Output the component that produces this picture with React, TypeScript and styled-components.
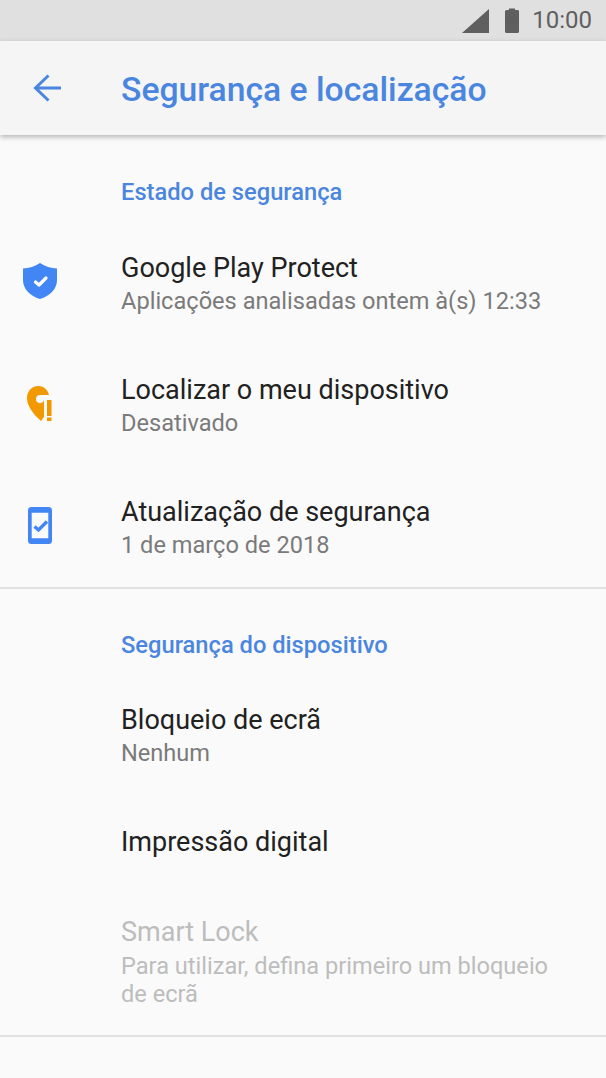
import React from 'react';
import styled, { createGlobalStyle } from 'styled-components';

const GlobalStyle = createGlobalStyle`
  html, body {
    margin: 0;
    padding: 0;
    background: #fafafa;
    font-family: Roboto, "Liberation Sans", sans-serif;
  }
  * { box-sizing: border-box; }
`;

const Screen = styled.div`
  width: 606px;
  height: 1078px;
  overflow: hidden;
  background: #fafafa;
  display: flex;
  flex-direction: column;
`;

const StatusBar = styled.div`
  height: 41px;
  flex: none;
  background: #e0e0e0;
  color: #5f5f5f;
  display: flex;
  align-items: center;
  justify-content: flex-end;
  padding-right: 14px;
`;

const SignalIcon = styled.svg`
  width: 27px;
  height: 24px;
  margin-right: 16px;
`;

const BatteryIcon = styled.svg`
  width: 14px;
  height: 25px;
  margin-right: 13px;
`;

const Clock = styled.span`
  font-size: 24px;
  font-weight: 400;
  line-height: 43px;
`;

const AppBar = styled.header`
  height: 94px;
  flex: none;
  background: #f5f5f5;
  box-shadow: 0 2px 5px rgba(0, 0, 0, 0.28);
  display: flex;
  align-items: center;
  position: relative;
  padding-left: 32px;
`;

const BackIcon = styled.svg`
  width: 30px;
  height: 28px;
  margin-right: 59px;
`;

const Title = styled.h1`
  margin: 2px 0 0;
  font-size: 33.7px;
  font-weight: 500;
  color: #4a86e0;
`;

const Section = styled.section<{ $top: number; $bottom: number }>`
  border-bottom: 2px solid #e2e2e2;
  padding: ${p => p.$top}px 0 ${p => p.$bottom}px;
`;

const SectionTitle = styled.h2`
  margin: 0 0 14px 121px;
  height: 30px;
  font-size: 23.7px;
  line-height: 30px;
  font-weight: 500;
  color: #4a86e0;
`;

const Row = styled.div<{ $height: number }>`
  height: ${p => p.$height}px;
  display: flex;
  align-items: center;
`;

const IconSlot = styled.div`
  width: 121px;
  flex: none;
  padding-left: 20px;
  display: flex;
  align-items: center;
`;

const RowText = styled.div`
  min-width: 0;
  flex: 1;
  padding-right: 50px;
`;

const RowTitle = styled.div<{ $disabled?: boolean }>`
  font-size: 27px;
  line-height: 36px;
  color: ${p => (p.$disabled ? '#bdbdbd' : '#212121')};
`;

const RowSub = styled.div<{ $disabled?: boolean }>`
  font-size: 23.6px;
  line-height: 28px;
  margin-top: ${p => (p.$disabled ? 2 : 1)}px;
  color: ${p => (p.$disabled ? '#bdbdbd' : '#7a7a7a')};
`;

const ItemIcon = styled.svg`
  width: 40px;
  height: 40px;
  display: block;
`;

const ShieldIcon = () => (
  <ItemIcon viewBox="0 0 40 40">
    <path fill="#4285f4" d="M20 1 C25 4.500 31 6 37 6.500 V18 C37 27 30 34 20 37 C10 34 3 27 3 18 V6.500 C9 6 15 4.500 20 1 Z" />
    <path fill="none" stroke="#fff" strokeWidth="3.200" strokeLinecap="round" strokeLinejoin="round" d="M15.500 20 L19 23 L26 16" />
  </ItemIcon>
);

const PinIcon = () => (
  <ItemIcon viewBox="0 0 40 40">
    <path fill="#f29900" d="M18.500 2 C24 2 28 6 29 11 H20 A4 4 0 1 0 24 15 V33 L21 37 C14 31 7 22 7 14.500 C7 8 11 2 18.500 2 Z" />
    <rect x="27" y="16" width="4.500" height="16" fill="#f29900" />
    <rect x="27" y="33.500" width="4.500" height="3.500" fill="#f29900" />
  </ItemIcon>
);

const PhoneCheckIcon = () => (
  <ItemIcon viewBox="0 0 40 40">
    <path fill="#4285f4" fillRule="evenodd" d="M11.500 1 H28.500 A3.500 3.500 0 0 1 32 4.500 V34.500 A3.500 3.500 0 0 1 28.500 38 H11.500 A3.500 3.500 0 0 1 8 34.500 V4.500 A3.500 3.500 0 0 1 11.500 1 Z M11.700 6.700 V32.300 H28.300 V6.700 Z" />
    <path fill="none" stroke="#4285f4" strokeWidth="3.400" d="M14.500 20.500 L18.500 24 L27 15.500" />
  </ItemIcon>
);

const App: React.FC = () => (
  <Screen>
    <GlobalStyle />
    <StatusBar>
      <SignalIcon viewBox="0 0 27 24">
        <path fill="#5f5f5f" d="M0 24 L27 0 V24 Z" />
      </SignalIcon>
      <BatteryIcon viewBox="0 0 14 25">
        <path fill="#5f5f5f" d="M4 2 V0.500 H10 V2 H12.500 A1.500 1.500 0 0 1 14 3.500 V23.500 A1.500 1.500 0 0 1 12.500 25 H1.500 A1.500 1.500 0 0 1 0 23.500 V3.500 A1.500 1.500 0 0 1 1.500 2 Z" />
      </BatteryIcon>
      <Clock>10:00</Clock>
    </StatusBar>
    <AppBar>
      <BackIcon viewBox="0 0 30 28">
        <path fill="none" stroke="#4a86e0" strokeWidth="3" d="M29 14 H4 M16.500 1.500 L3.500 14 L16.500 26.500" />
      </BackIcon>
      <Title>Segurança e localização</Title>
    </AppBar>
    <Section $top={42} $bottom={0}>
      <SectionTitle>Estado de segurança</SectionTitle>
      <Row $height={122}>
        <IconSlot><ShieldIcon /></IconSlot>
        <RowText>
          <RowTitle>Google Play Protect</RowTitle>
          <RowSub>Aplicações analisadas ontem à(s) 12:33</RowSub>
        </RowText>
      </Row>
      <Row $height={122}>
        <IconSlot><PinIcon /></IconSlot>
        <RowText>
          <RowTitle>Localizar o meu dispositivo</RowTitle>
          <RowSub>Desativado</RowSub>
        </RowText>
      </Row>
      <Row $height={122}>
        <IconSlot><PhoneCheckIcon /></IconSlot>
        <RowText>
          <RowTitle>Atualização de segurança</RowTitle>
          <RowSub>1 de março de 2018</RowSub>
        </RowText>
      </Row>
    </Section>
    <Section $top={41} $bottom={4}>
      <SectionTitle>Segurança do dispositivo</SectionTitle>
      <Row $height={120}>
        <IconSlot />
        <RowText>
          <RowTitle>Bloqueio de ecrã</RowTitle>
          <RowSub>Nenhum</RowSub>
        </RowText>
      </Row>
      <Row $height={96}>
        <IconSlot />
        <RowText>
          <RowTitle>Impressão digital</RowTitle>
        </RowText>
      </Row>
      <Row $height={141}>
        <IconSlot />
        <RowText>
          <RowTitle $disabled>Smart Lock</RowTitle>
          <RowSub $disabled>Para utilizar, defina primeiro um bloqueio de ecrã</RowSub>
        </RowText>
      </Row>
    </Section>
  </Screen>
);

export default App;
